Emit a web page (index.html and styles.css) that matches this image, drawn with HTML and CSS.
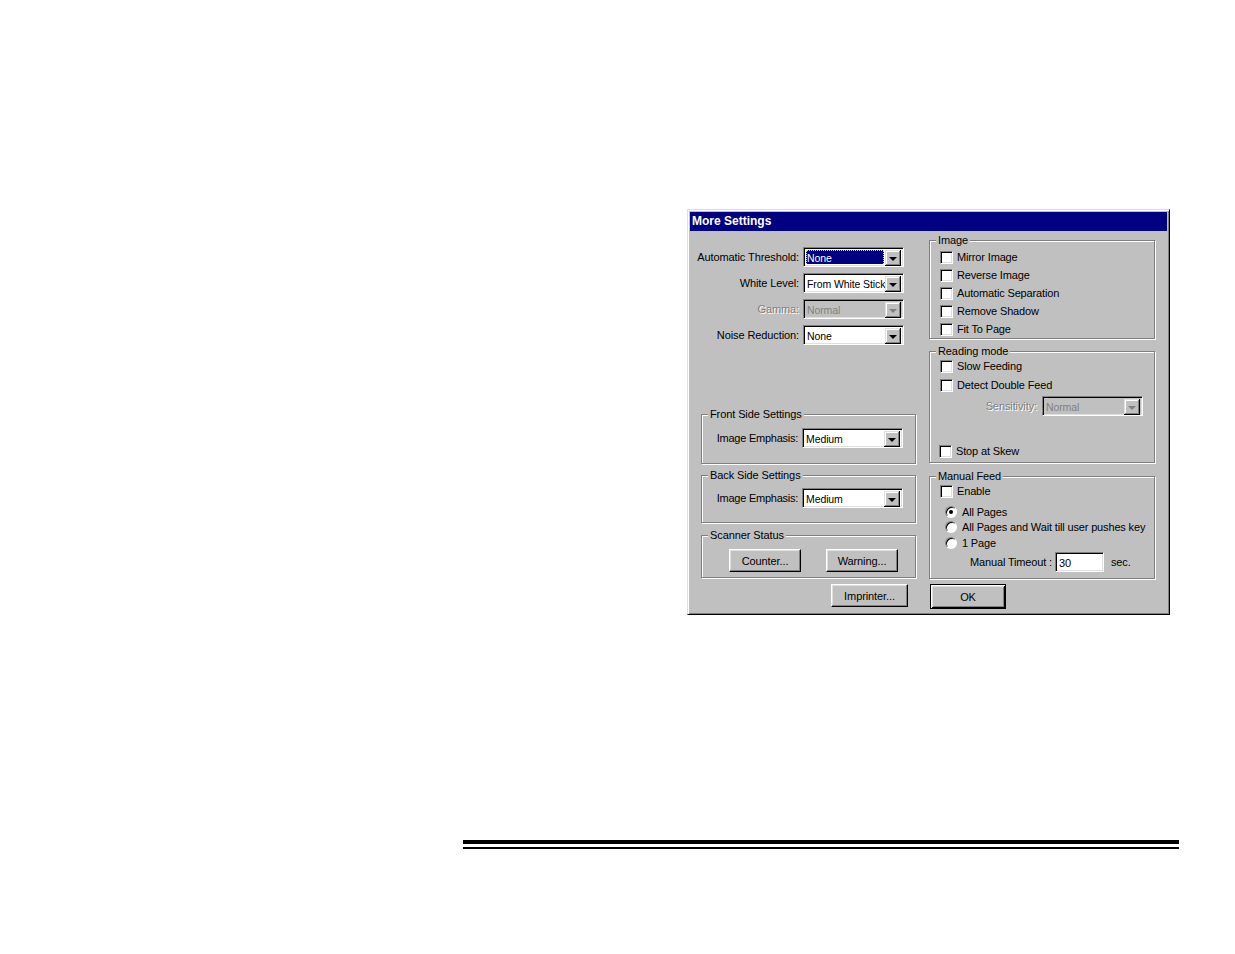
FILE: index.html
```html
<!DOCTYPE html>
<html>
<head>
<meta charset="utf-8">
<title>More Settings</title>
<link rel="stylesheet" href="styles.css">
</head>
<body>
<div class="page">
  <div class="dialog">
    <div class="titlebar">More Settings</div>
    <div class="body">
      <div class="col-left">
        <div class="form">
          <label class="lbl">Automatic Threshold:</label>
          <div class="combo"><span class="val"><span class="sel">None</span></span><span class="arrow"></span></div>
          <label class="lbl">White Level:</label>
          <div class="combo"><span class="val">From White Stick</span><span class="arrow"></span></div>
          <label class="lbl disabled">Gamma:</label>
          <div class="combo off"><span class="val">Normal</span><span class="arrow"></span></div>
          <label class="lbl">Noise Reduction:</label>
          <div class="combo"><span class="val">None</span><span class="arrow"></span></div>
        </div>

        <div class="group g-front">
          <span class="legend">Front Side Settings</span>
          <div class="form form-in">
            <label class="lbl">Image Emphasis:</label>
            <div class="combo"><span class="val">Medium</span><span class="arrow"></span></div>
          </div>
        </div>

        <div class="group g-back">
          <span class="legend">Back Side Settings</span>
          <div class="form form-in">
            <label class="lbl">Image Emphasis:</label>
            <div class="combo"><span class="val">Medium</span><span class="arrow"></span></div>
          </div>
        </div>

        <div class="group g-status">
          <span class="legend">Scanner Status</span>
          <div class="btnrow">
            <div class="btn">Counter...</div>
            <div class="btn">Warning...</div>
          </div>
        </div>

        <div class="btn btn-imprinter">Imprinter...</div>
      </div>

      <div class="col-right">
        <div class="group g-image">
          <span class="legend">Image</span>
          <div class="chk"><span class="box"></span>Mirror Image</div>
          <div class="chk"><span class="box"></span>Reverse Image</div>
          <div class="chk"><span class="box"></span>Automatic Separation</div>
          <div class="chk"><span class="box"></span>Remove Shadow</div>
          <div class="chk"><span class="box"></span>Fit To Page</div>
        </div>

        <div class="group g-reading">
          <span class="legend">Reading mode</span>
          <div class="chk"><span class="box"></span>Slow Feeding</div>
          <div class="chk chk-double"><span class="box"></span>Detect Double Feed</div>
          <div class="sens">
            <label class="lbl disabled">Sensitivity:</label>
            <div class="combo off"><span class="val">Normal</span><span class="arrow"></span></div>
          </div>
          <div class="chk chk-skew"><span class="box"></span>Stop at Skew</div>
        </div>

        <div class="group g-manual">
          <span class="legend">Manual Feed</span>
          <div class="chk"><span class="box"></span>Enable</div>
          <div class="radios">
            <div class="rad"><span class="dot on"></span>All Pages</div>
            <div class="rad"><span class="dot"></span>All Pages and Wait till user pushes key</div>
            <div class="rad"><span class="dot"></span>1 Page</div>
          </div>
          <div class="timeout">
            <span class="tlbl">Manual Timeout :</span>
            <div class="field">30</div>
            <span class="sec">sec.</span>
          </div>
        </div>

        <div class="btn btn-ok">OK</div>
      </div>
    </div>
  </div>

  <div class="rules">
    <div class="rule-thick"></div>
    <div class="rule-thin"></div>
  </div>
</div>
</body>
</html>
```
FILE: styles.css
```css
html, body {
  margin: 0;
  padding: 0;
  background: #ffffff;
}

.page {
  width: 1235px;
  height: 954px;
  padding-top: 209px;
  box-sizing: border-box;
  font-family: "Liberation Sans", Arial, sans-serif;
  font-size: 11px;
  color: #000;
}

.dialog {
  margin-left: 687px;
  width: 483px;
  height: 406px;
  box-sizing: border-box;
  background: #c0c0c0;
  border: 1px solid;
  border-color: #dfdfdf #000 #000 #dfdfdf;
  box-shadow: inset 1px 1px 0 #fff, inset -1px -1px 0 #808080;
  padding: 2px 2px 1px 2px;
}

.titlebar {
  height: 19px;
  background: #000080;
  color: #fff;
  font-weight: bold;
  font-size: 12px;
  line-height: 19px;
  padding-left: 2px;
}

.body {
  display: flex;
}

.col-left {
  width: 230px;
  display: flex;
  flex-direction: column;
}

.col-right {
  width: 226px;
  margin-left: 9px;
  display: flex;
  flex-direction: column;
}

/* label + combo grid */
.form {
  display: grid;
  grid-template-columns: 109px 101px;
  column-gap: 4px;
  row-gap: 6px;
  margin-top: 16px;
  align-items: center;
}

.form-in {
  grid-template-columns: 96px 101px;
  margin-top: 0;
}

.lbl {
  text-align: right;
  white-space: nowrap;
  line-height: 13px;
  letter-spacing: -0.1px;
}

.form-in .lbl {
  letter-spacing: -0.25px;
}

.disabled {
  color: #808080;
  text-shadow: 1px 1px 0 #fff;
}

/* combo box */
.combo {
  width: 101px;
  height: 20px;
  box-sizing: border-box;
  border: 1px solid;
  border-color: #808080 #fff #fff #808080;
  box-shadow: inset 1px 1px 0 #000, inset -1px -1px 0 #dfdfdf;
  background: #fff;
  padding: 2px;
  display: flex;
}

.combo.off {
  background: #c0c0c0;
  color: #808080;
}

.val {
  flex: 1;
  line-height: 16px;
  font-size: 10.5px;
  letter-spacing: -0.1px;
  white-space: nowrap;
  overflow: hidden;
  padding-left: 1px;
}

.sel {
  display: block;
  background: #000080;
  color: #fff;
  outline: 1px dotted #e0e080;
  outline-offset: -1px;
  margin-right: 1px;
  padding-left: 1px;
  margin-left: -1px;
}

.arrow {
  width: 16px;
  height: 16px;
  flex: none;
  background: #c0c0c0;
  box-shadow: inset -1px -1px 0 #000, inset 1px 1px 0 #dfdfdf, inset -2px -2px 0 #808080, inset 2px 2px 0 #fff;
  display: flex;
  align-items: center;
  justify-content: center;
}

.arrow::after {
  content: "";
  width: 0;
  height: 0;
  border-left: 4px solid transparent;
  border-right: 4px solid transparent;
  border-top: 4px solid #000;
  margin-top: 1px;
}

.combo.off .arrow::after {
  border-top-color: #808080;
}

/* group boxes */
.group {
  position: relative;
  border: 1px solid #808080;
  box-shadow: inset 1px 1px 0 #fff, 1px 1px 0 #fff;
}

.legend {
  position: absolute;
  top: -7px;
  left: 6px;
  padding: 0 2px;
  line-height: 13px;
  background: #c0c0c0;
  white-space: nowrap;
  letter-spacing: -0.1px;
}

.g-front {
  margin-top: 69px;
  margin-left: 11px;
  width: 215px;
  height: 50px;
  box-sizing: border-box;
  padding-top: 13px;
}

.g-back {
  margin-top: 11px;
  margin-left: 11px;
  width: 215px;
  height: 48px;
  box-sizing: border-box;
  padding-top: 12px;
}

.g-status {
  margin-top: 12px;
  margin-left: 11px;
  width: 215px;
  height: 43px;
  box-sizing: border-box;
  padding-top: 13px;
}

.btnrow {
  display: flex;
  gap: 25px;
  padding-left: 27px;
}

.btn {
  width: 72px;
  height: 23px;
  box-sizing: border-box;
  border: 1px solid;
  border-color: #fff #000 #000 #fff;
  box-shadow: inset -1px -1px 0 #808080, inset 1px 1px 0 #dfdfdf;
  background: #c0c0c0;
  display: flex;
  align-items: center;
  justify-content: center;
  white-space: nowrap;
  letter-spacing: -0.1px;
}

.btn-imprinter {
  margin-top: 6px;
  margin-left: 141px;
  width: 77px;
}

.btn-ok {
  margin-top: 5px;
  margin-left: 1px;
  width: 76px;
  height: 25px;
  border: 1px solid #000;
  box-shadow: inset 1px 1px 0 #fff, inset -1px -1px 0 #000, inset 2px 2px 0 #dfdfdf, inset -2px -2px 0 #808080;
}

/* checkboxes */
.chk {
  height: 18px;
  display: flex;
  align-items: center;
  white-space: nowrap;
  padding-left: 10px;
  letter-spacing: -0.15px;
}

.box {
  width: 13px;
  height: 13px;
  box-sizing: border-box;
  flex: none;
  border: 1px solid;
  border-color: #808080 #fff #fff #808080;
  box-shadow: inset 1px 1px 0 #000, inset -1px -1px 0 #dfdfdf;
  background: #fff;
  margin-right: 4px;
}

.g-image {
  margin-top: 9px;
  height: 99px;
  box-sizing: border-box;
  padding-top: 7px;
}

.g-reading {
  margin-top: 12px;
  height: 112px;
  box-sizing: border-box;
  padding-top: 5px;
}

.chk-double {
  margin-top: 1px;
}

.sens {
  display: flex;
  align-items: center;
  margin-top: 2px;
  gap: 5px;
  padding-left: 53px;
}

.sens .lbl {
  width: 54px;
}

.chk-skew {
  margin-top: 26px;
  padding-left: 9px;
}

.g-manual {
  margin-top: 13px;
  height: 103px;
  box-sizing: border-box;
  padding-top: 5px;
}

.radios {
  margin-top: 4px;
  padding-left: 15px;
  letter-spacing: -0.15px;
}

.rad {
  height: 15.5px;
  display: flex;
  align-items: center;
  white-space: nowrap;
}

.dot {
  width: 12px;
  height: 12px;
  box-sizing: border-box;
  flex: none;
  border-radius: 50%;
  background: #fff;
  border: 1px solid;
  border-color: #808080 #fff #fff #808080;
  box-shadow: inset 1px 1px 0 #000;
  margin-right: 5px;
  display: flex;
  align-items: center;
  justify-content: center;
}

.dot.on::after {
  content: "";
  width: 4px;
  height: 4px;
  border-radius: 50%;
  background: #000;
}

.timeout {
  display: flex;
  align-items: center;
  height: 20px;
  margin-top: 1px;
  padding-left: 40px;
  letter-spacing: -0.15px;
}

.tlbl {
  white-space: nowrap;
  width: 81px;
}

.field {
  margin-left: 4px;
  width: 49px;
  height: 20px;
  box-sizing: border-box;
  border: 1px solid;
  border-color: #808080 #fff #fff #808080;
  box-shadow: inset 1px 1px 0 #000, inset -1px -1px 0 #dfdfdf;
  background: #fff;
  padding: 2px 3px;
  line-height: 16px;
}

.sec {
  margin-left: 7px;
}

/* page rules */
.rules {
  margin-top: 225px;
  margin-left: 463px;
  width: 716px;
}

.rule-thick {
  height: 4px;
  background: #000;
}

.rule-thin {
  height: 2px;
  margin-top: 3px;
  background: #000;
}
```
